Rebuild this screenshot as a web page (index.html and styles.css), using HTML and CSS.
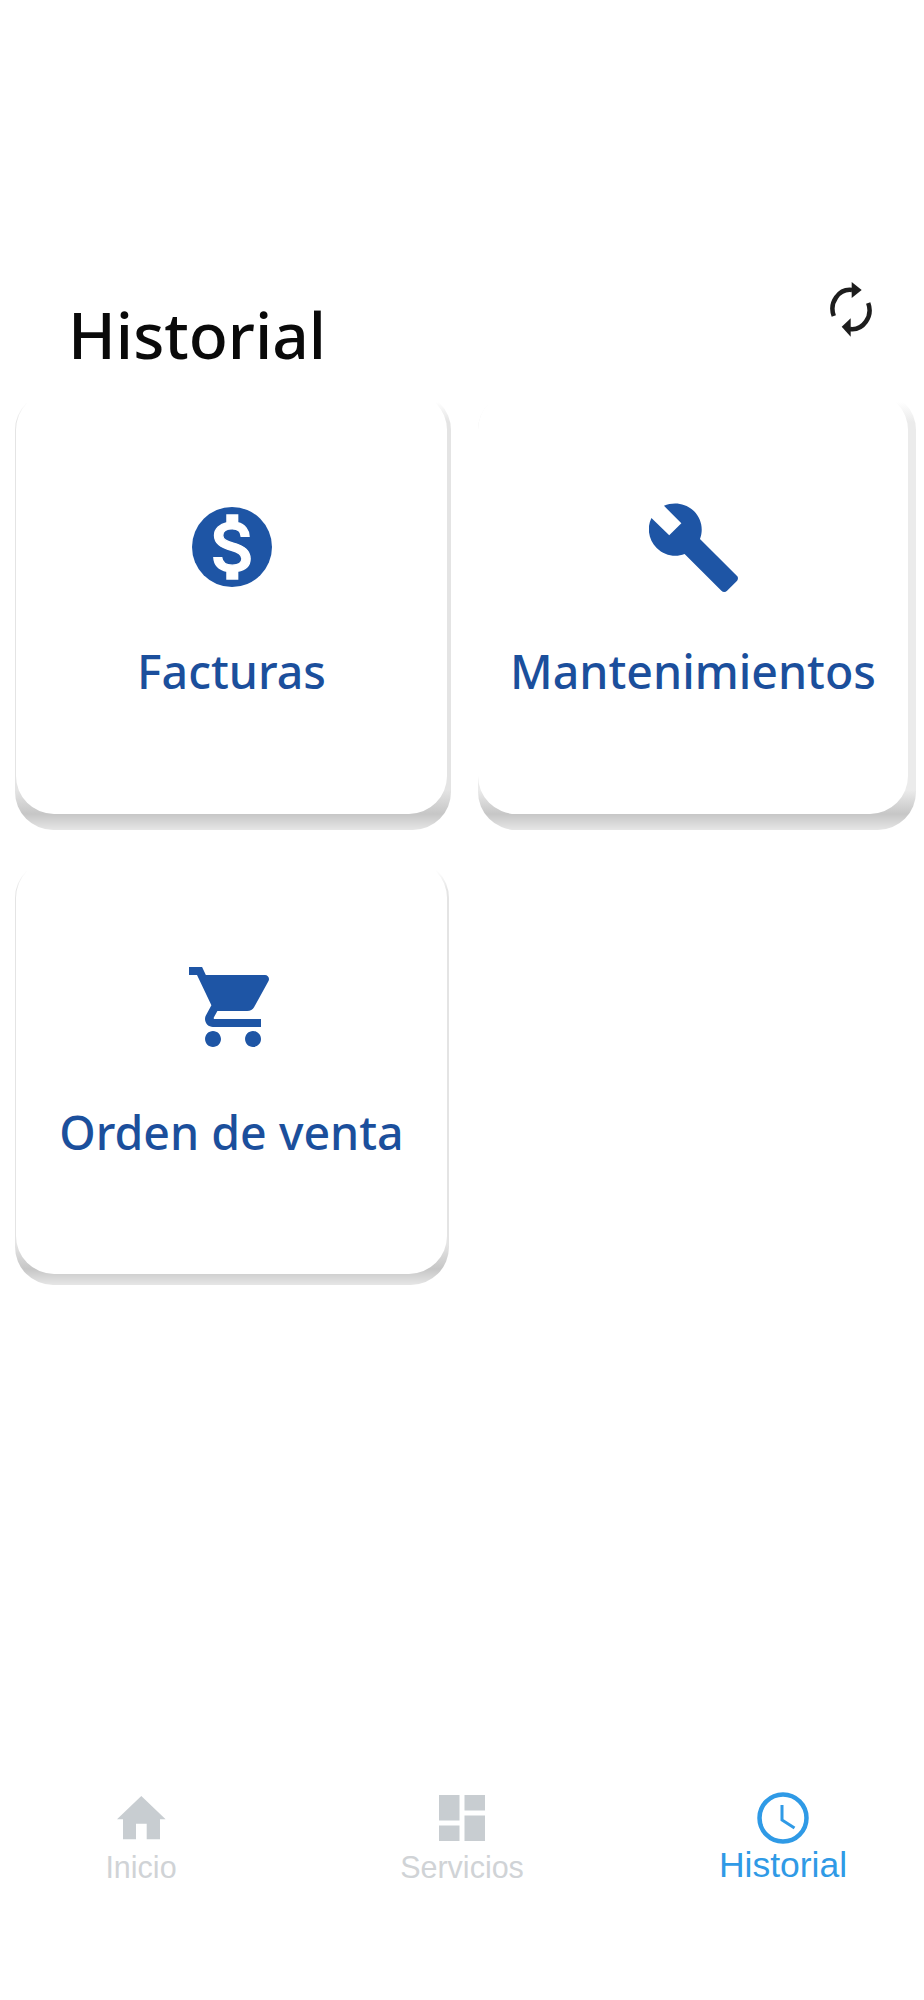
FILE: index.html
```html
<!DOCTYPE html>
<html lang="es">
<head>
<meta charset="utf-8">
<title>Historial</title>
<link rel="stylesheet" href="styles.css">
</head>
<body>
<div class="page">
  <header class="header">
    <h1 class="title">Historial</h1>
    <svg class="refresh" viewBox="0 0 42 55" aria-hidden="true">
      <path class="refresh-arc" d="M3.8 34A17.5 19 0 0 1 22 8"/>
      <path class="refresh-arc" d="M38.2 21A17.5 19 0 0 1 20 47"/>
      <polygon class="refresh-head" points="21.7,0 31.7,8 21.7,16"/>
      <polygon class="refresh-head" points="20.7,36.3 11.7,44.7 20.7,54.7"/>
    </svg>
  </header>
  <main class="grid">
    <section class="shell shell-left">
      <div class="card card-tall">
        <div class="card-icon">
          <svg class="icon-dollar" viewBox="2 2 20 20" aria-hidden="true">
            <circle class="dollar-disc" cx="12" cy="12" r="10"/>
            <path class="dollar-sign" d="M13.41 18.09V20h-2.67v-1.93c-1.71-.36-3.16-1.46-3.27-3.4h1.96c.1 1.05.82 1.87 2.65 1.87 1.96 0 2.4-.98 2.4-1.59 0-.83-.44-1.61-2.67-2.14-2.48-.6-4.18-1.62-4.18-3.67 0-1.72 1.39-2.84 3.11-3.21V4h2.67v1.95c1.86.45 2.79 1.86 2.85 3.39H14.3c-.05-1.11-.64-1.87-2.22-1.87-1.5 0-2.4.68-2.4 1.64 0 .84.65 1.39 2.67 1.91s4.18 1.39 4.18 3.91c-.01 1.83-1.38 2.83-3.12 3.16z"/>
          </svg>
        </div>
        <div class="card-label">Facturas</div>
      </div>
    </section>
    <section class="shell shell-right">
      <div class="card card-tall">
        <div class="card-icon">
          <svg class="icon-wrench" viewBox="1 1 22 22" aria-hidden="true"><path d="M22.7 19l-9.1-9.1c.9-2.3.4-5-1.5-6.9-2-2-5-2.4-7.4-1.3L9 6 6 9 1.6 4.7C.4 7.1.9 10.1 2.9 12.1c1.9 1.9 4.6 2.4 6.9 1.5l9.1 9.1c.4.4 1 .4 1.4 0l2.3-2.3c.5-.4.5-1.1.1-1.4z"/></svg>
        </div>
        <div class="card-label">Mantenimientos</div>
      </div>
    </section>
    <section class="shell shell-small">
      <div class="card">
        <div class="card-icon">
          <svg class="icon-cart" viewBox="1 2 20 20" aria-hidden="true"><path d="M7 18c-1.1 0-1.99.9-1.99 2S5.9 22 7 22s2-.9 2-2-.9-2-2-2zM1 2v2h2l3.6 7.59-1.35 2.45c-.16.28-.25.61-.25.96 0 1.1.9 2 2 2h12v-2H7.42c-.14 0-.25-.11-.25-.25l.03-.12.9-1.63h7.45c.75 0 1.41-.41 1.75-1.03l3.58-6.49c.08-.14.12-.31.12-.48 0-.55-.45-1-1-1H5.21l-.94-2H1zm16 16c-1.1 0-1.99.9-1.99 2s.89 2 1.99 2 2-.9 2-2-.9-2-2-2z"/></svg>
        </div>
        <div class="card-label card-label-low">Orden de venta</div>
      </div>
    </section>
  </main>
  <nav class="tabs">
    <div class="tab">
      <div class="tab-icon">
        <svg class="icon-home" viewBox="0 0 49 44" aria-hidden="true"><path d="M24.3 0L48.6 23.3H43V43.3H29.7V27.7H19V43.3H6V23.3H0Z"/></svg>
      </div>
      <span class="tab-label">Inicio</span>
    </div>
    <div class="tab">
      <div class="tab-icon">
        <svg class="icon-grid" viewBox="0 0 46 46" aria-hidden="true"><path d="M0 0H20.5V25.5H0ZM25.5 0H46V15.5H25.5ZM0 30.5H20.5V46H0ZM25.5 20.5H46V46H25.5Z"/></svg>
      </div>
      <span class="tab-label">Servicios</span>
    </div>
    <div class="tab tab-active">
      <div class="tab-icon">
        <svg class="icon-clock" viewBox="0 0 52 52" aria-hidden="true">
          <circle cx="26" cy="26" r="23.5"/>
          <path class="clock-hands" d="M25 13V28L37.500 36"/>
        </svg>
      </div>
      <span class="tab-label">Historial</span>
    </div>
  </nav>
</div>
</body>
</html>
```
FILE: styles.css
```css
* { box-sizing: border-box; }
html, body { margin: 0; padding: 0; background: #fff; }
.page {
  width: 924px;
  height: 2000px;
  display: flex;
  flex-direction: column;
  font-family: "Noto Sans", "Open Sans", sans-serif;
}
.header {
  height: 392px;
  padding: 282px 52px 0 68px;
  display: flex;
  justify-content: space-between;
  align-items: flex-start;
}
.title {
  margin: 15px 0 0;
  font-size: 64px;
  line-height: 76px;
  font-weight: 500;
  color: #0a0a0a;
}
.refresh { width: 42px; height: 55px; display: block; }
.refresh-arc { fill: none; stroke: #1d1d1d; stroke-width: 4.5; }
.refresh-head { fill: #1d1d1d; }
.grid {
  display: grid;
  grid-template-columns: 436px 438px;
  column-gap: 27px;
  row-gap: 30px;
  padding-left: 15px;
  align-items: start;
}
.shell {
  --side: #e4e4e4;
  border-radius: 38px;
  background: linear-gradient(to bottom, #fff 0, #fff 10px, var(--side) 30px, var(--side) calc(100% - 40px), #c6c6c6 calc(100% - 16px), #e6e6e6 100%);
}
.shell-left { padding: 0 4px 16px 1px; }
.shell-right { --side: #ebebeb; padding: 0 8px 16px 0; }
.shell-small { padding: 0 2px 11px 1px; margin-right: 2px; }
.card {
  height: 414px;
  padding-top: 101px;
  border-radius: 38px;
  background: #fff;
  display: flex;
  flex-direction: column;
  align-items: center;
}
.card-tall { height: 422px; padding-top: 109px; }
.card-icon {
  height: 92px;
  display: flex;
  align-items: center;
  justify-content: center;
}
.card-icon svg { display: block; fill: #1e55a5; }
.dollar-disc { fill: #1e55a5; }
.dollar-sign { fill: #fff; stroke: #fff; stroke-width: 0.35; }
.icon-dollar { width: 80px; height: 80px; }
.icon-wrench { width: 89px; height: 89px; }
.icon-cart { width: 80px; height: 80px; margin-right: 6px; }
.card-label {
  margin-top: 48px;
  font-size: 46.5px;
  line-height: 60px;
  font-weight: 500;
  color: #1b4f9c;
  white-space: nowrap;
}
.card-label-low { margin-top: 49px; }
.tabs {
  margin-top: auto;
  padding: 0 91px 115px;
  display: flex;
  justify-content: space-between;
  font-family: "Liberation Sans", Arial, sans-serif;
}
.tab {
  width: 100px;
  display: flex;
  flex-direction: column;
  align-items: center;
  color: #d0d3d6;
}
.tab-icon {
  height: 52px;
  margin-bottom: 5px;
  display: flex;
  align-items: center;
  justify-content: center;
}
.tab-icon svg { display: block; fill: #c8cdd1; }
.icon-home { width: 49px; height: 44px; }
.icon-grid { width: 46px; height: 46px; }
.icon-clock { width: 52px; height: 52px; }
.tab-label {
  font-size: 30.5px;
  line-height: 36px;
  white-space: nowrap;
}
.tab-active { color: #2f9ae6; }
.tab-active .tab-label { font-size: 35.5px; margin-top: -2px; }
.tab-icon .icon-clock { fill: none; stroke: #2f9ae6; stroke-width: 4.5; }
.tab-icon .clock-hands { stroke-width: 3; }
```
